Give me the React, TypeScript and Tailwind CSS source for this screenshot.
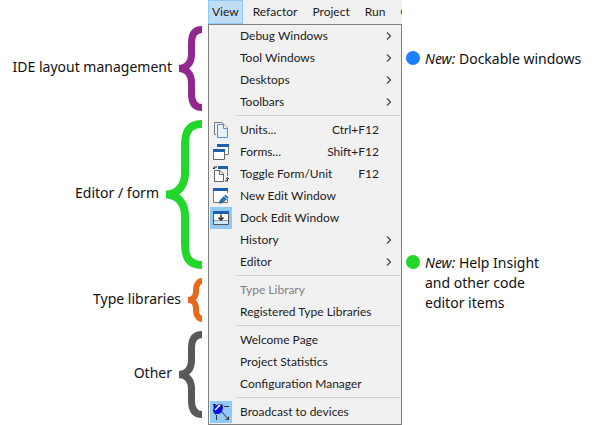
import React from "react";

type IconName = "units" | "forms" | "toggle" | "newEdit" | "dock" | "broadcast";

type Item = {
  label: string;
  shortcut?: string;
  submenu?: boolean;
  disabled?: boolean;
  icon?: IconName;
  checked?: boolean;
};

const groups: Item[][] = [
  [
    { label: "Debug Windows", submenu: true },
    { label: "Tool Windows", submenu: true },
    { label: "Desktops", submenu: true },
    { label: "Toolbars", submenu: true },
  ],
  [
    { label: "Units...", shortcut: "Ctrl+F12", icon: "units" },
    { label: "Forms...", shortcut: "Shift+F12", icon: "forms" },
    { label: "Toggle Form/Unit", shortcut: "F12", icon: "toggle" },
    { label: "New Edit Window", icon: "newEdit" },
    { label: "Dock Edit Window", icon: "dock", checked: true },
    { label: "History", submenu: true },
    { label: "Editor", submenu: true },
  ],
  [{ label: "Type Library", disabled: true }, { label: "Registered Type Libraries" }],
  [{ label: "Welcome Page" }, { label: "Project Statistics" }, { label: "Configuration Manager" }],
  [{ label: "Broadcast to devices", icon: "broadcast", checked: true }],
];

function Icon({ name }: { name: IconName }) {
  const svg = (children: React.ReactNode) => (
    <svg width="18" height="18" viewBox="0 0 18 18" fill="none" aria-hidden="true">
      {children}
    </svg>
  );
  switch (name) {
    case "units":
      return svg(
        <>
          <path d="M4 13.5H2.5V1.5H10L12 3.5" fill="#f4f4f4" stroke="#777" />
          <path d="M5.5 3.5H12L15.5 7V16.5H5.5Z" fill="#e3f0fd" stroke="#5c8dc4" />
          <path d="M11.5 3.5V7.5H15.5" fill="#fff" stroke="#5c8dc4" />
        </>
      );
    case "forms":
      return svg(
        <>
          <path d="M5.5 3V1.5H16.5V11.5H13" fill="#fff" stroke="#777" />
          <path d="M5 1H17V4H5Z" fill="#1c5fab" />
          <path d="M1.5 6.5H12.5V16.5H1.5Z" fill="#fff" stroke="#666" />
          <path d="M1 6H13V9H1Z" fill="#1c5fab" />
        </>
      );
    case "toggle":
      return svg(
        <>
          <path d="M6 1H16V4H6Z" fill="#1c5fab" />
          <path d="M15.5 4V11" stroke="#777" />
          <path d="M2.5 5.5H8L11.5 9V16.5H2.5Z" fill="#fff" stroke="#666" />
          <path d="M7.5 5.5V9.5H11.5" stroke="#666" />
          <path d="M2 4V2H5M1 3L2 4L3 3M13 16H15.5V13.5M14 14L15.5 12.5L17 14" stroke="#222" />
        </>
      );
    case "newEdit":
      return svg(
        <>
          <path d="M1.5 2.5H15.5V15.5H1.5Z" fill="#fff" />
          <path d="M1.5 4V15.5H7M15.5 4V6M11 15.5H15.5V12" stroke="#777" />
          <path d="M1 1H16V4H1Z" fill="#1c5fab" />
          <path d="M8 13L13.5 7.5L16.5 10.5L11 16L7 16.5Z" fill="#2476b8" />
          <path d="M12 9L15 12" stroke="#b9dcf4" />
          <path d="M7 16.5L8 13.5L10 16Z" fill="#4a4a4a" />
        </>
      );
    case "dock":
      return svg(
        <>
          <path d="M1.5 2.5H16.5V15.5H1.5Z" fill="#fff" stroke="#555" />
          <path d="M1 2H17V5H1Z" fill="#1c5fab" />
          <path d="M2 12H16V15H2Z" fill="#cdeafb" />
          <path d="M2 11.5H16" stroke="#999" />
          <path d="M9 5.5V11" stroke="#222" strokeWidth="1.4" />
          <path d="M6.5 8.5L9 11L11.5 8.5" stroke="#222" strokeWidth="1.4" />
        </>
      );
    case "broadcast":
      return svg(
        <>
          <path d="M2 3L8 1L11 4L10 9L7 11L3 11L1 8Z" fill="#0b0bea" />
          <path d="M1 1H4L2 4ZM9 1L11 2L10 5Z" fill="#111" />
          <path d="M3 7L8 2" stroke="#fff" strokeWidth="1.5" />
          <path d="M6 2L8 4" stroke="#d7df30" />
          <path d="M12 3.5H17M4.5 12V17M10 9L16.5 16.5M16.5 13.5V16.5H13.5" stroke="#333" />
          <path d="M1 9L4 12" stroke="#777" />
        </>
      );
  }
}

function MenuRow({ item }: { item: Item }) {
  return (
    <button
      type="button"
      role="menuitem"
      disabled={item.disabled}
      className={`flex h-[22px] w-full items-center pl-px text-left ${
        item.disabled ? "text-[#808080]" : "text-[#1c1c1c]"
      }`}
    >
      <span
        className={`mr-2 flex size-[22px] shrink-0 items-center justify-center ${
          item.checked ? "bg-[#90c8f6]" : ""
        }`}
      >
        {item.icon && <Icon name={item.icon} />}
      </span>
      <span className="flex-1 whitespace-nowrap">{item.label}</span>
      {item.shortcut && <span className="pr-[22px]">{item.shortcut}</span>}
      {item.submenu && (
        <svg className="mr-[9px]" width="6" height="8" viewBox="0 0 6 8" fill="none" aria-hidden="true">
          <path d="M1 0.5L4.5 4L1 7.5" stroke="#444" strokeWidth="1.2" />
        </svg>
      )}
    </button>
  );
}

function Brace({ width, height, stroke, color }: { width: number; height: number; stroke: number; color: string }) {
  const h = stroke / 2;
  const x = width / 2 + 1;
  const m = height / 2;
  const r = Math.min(width * 0.6, m * 0.4);
  const b = height - h;
  const d = `M${width} ${h}C${x + 3} ${h} ${x} ${h + r * 0.4} ${x} ${h + r}V${m - r}C${x} ${m - r * 0.4} ${
    x * 0.6
  } ${m} 0 ${m}C${x * 0.6} ${m} ${x} ${m + r * 0.4} ${x} ${m + r}V${b - r}C${x} ${b - r * 0.4} ${
    x + 3
  } ${b} ${width} ${b}`;
  return (
    <svg className="shrink-0" width={width} height={height} viewBox={`0 0 ${width} ${height}`} fill="none" aria-hidden="true">
      <path d={d} stroke={color} strokeWidth={stroke} strokeLinejoin="bevel" />
    </svg>
  );
}

const braces = [
  { label: "IDE layout management", width: 23, height: 85, stroke: 7, color: "#92278f" },
  { label: "Editor / form", width: 36, height: 149, stroke: 8, color: "#22d62a" },
  { label: "Type libraries", width: 14, height: 44, stroke: 6, color: "#e8691b" },
  { label: "Other", width: 23, height: 87, stroke: 7, color: "#58595b" },
];

function Note({ color, children }: { color: string; children: React.ReactNode }) {
  return (
    <div className="flex items-start gap-[5px]">
      <span className={`mt-0.5 size-[14px] shrink-0 rounded-full ${color}`} />
      <p className="leading-5">
        <em>New:</em> {children}
      </p>
    </div>
  );
}

export default function App() {
  return (
    <main className="grid grid-cols-[minmax(0,208fr)_194px_minmax(0,198fr)] bg-white font-['Noto_Sans','Open_Sans',sans-serif] text-[14px] text-[#111]">
      <section className="flex flex-col items-end gap-[9px] pt-[26px] pr-[6px]">
        {braces.map((b) => (
          <div key={b.label} className="flex items-center gap-[7px]">
            <span className="pb-1 whitespace-nowrap">{b.label}</span>
            <Brace width={b.width} height={b.height} stroke={b.stroke} color={b.color} />
          </div>
        ))}
      </section>

      <section className="font-[Lato,'Open_Sans',sans-serif] text-[12px]">
        <nav className="flex h-6 gap-[5px] overflow-hidden bg-[#f0f0f0] text-[#1c1c1c]">
          <button type="button" className="border border-[#90c8f6] bg-[#bfddf5] px-[3px]">
            View
          </button>
          {["Refactor", "Project", "Run", "C"].map((name) => (
            <button key={name} type="button" className="px-[5px]">
              {name}
            </button>
          ))}
        </nav>
        <div role="menu" className="border border-[#808080] bg-[#f1f1f1] pb-px">
          {groups.map((items, i) => (
            <React.Fragment key={items[0].label}>
              {i > 0 && <hr className="mt-[2px] mr-px mb-[3px] ml-[27px] border-[#d2d2d2]" />}
              {items.map((item) => (
                <MenuRow key={item.label} item={item} />
              ))}
            </React.Fragment>
          ))}
        </div>
      </section>

      <section className="flex flex-col gap-[184px] pt-[49px] pl-1">
        <Note color="bg-[#1a80ff]">Dockable windows</Note>
        <Note color="bg-[#22d62a]">
          Help Insight
          <br />
          and other code
          <br />
          editor items
        </Note>
      </section>
    </main>
  );
}
